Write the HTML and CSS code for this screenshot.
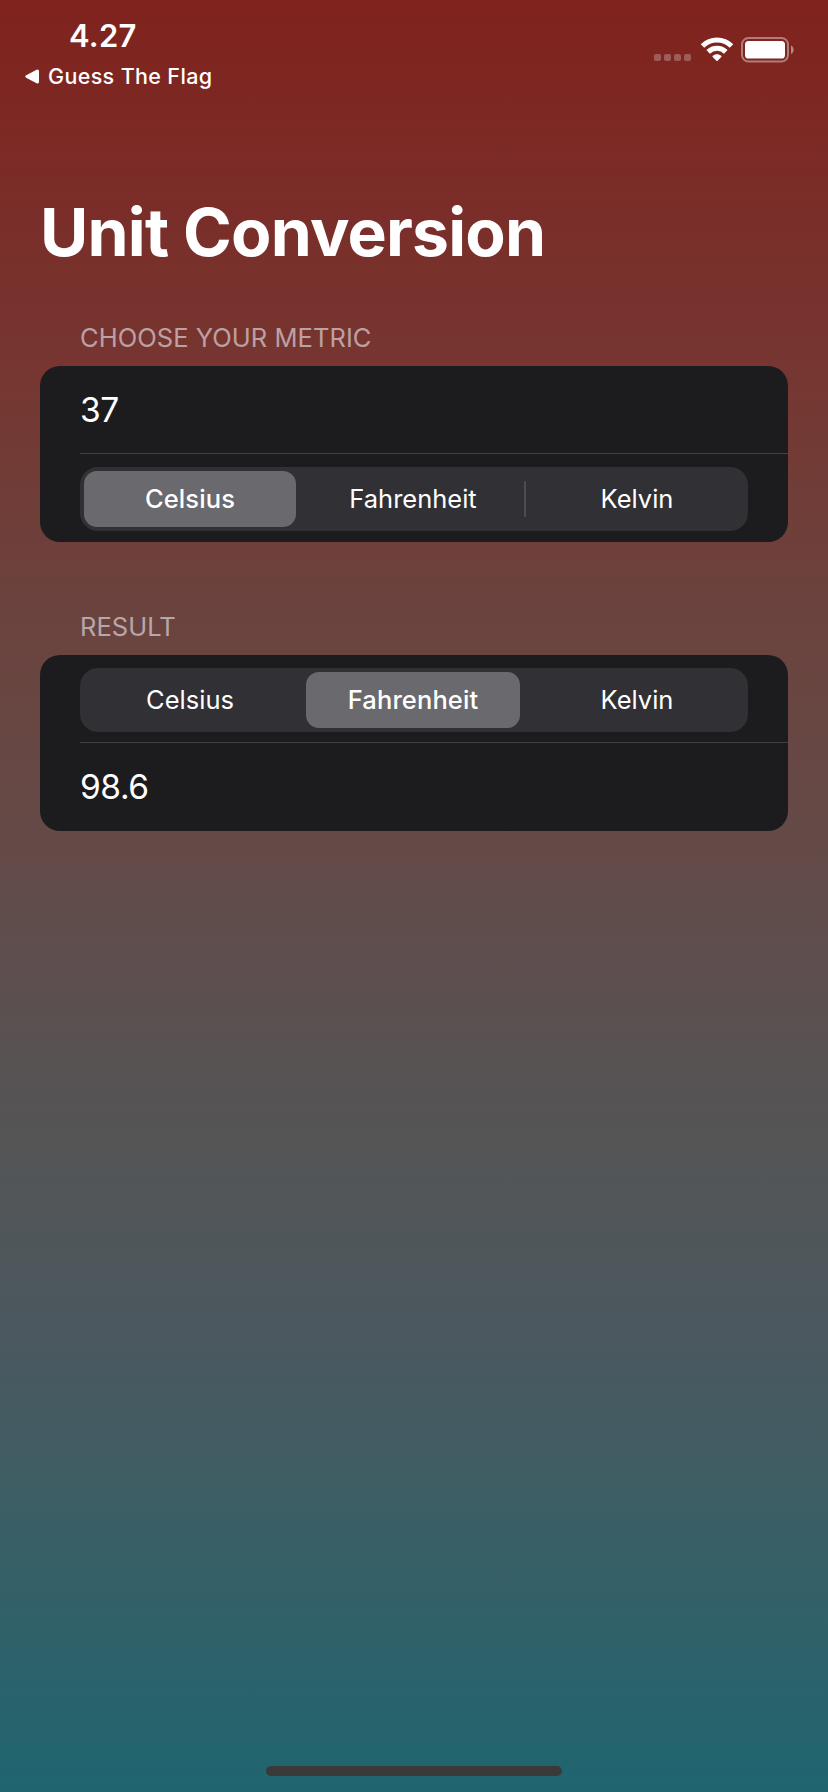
FILE: index.html
```html
<!DOCTYPE html>
<html lang="en">
<head>
<meta charset="utf-8">
<title>Unit Conversion</title>
<link rel="stylesheet" href="styles.css">
</head>
<body>
<div class="screen">
  <header class="status">
    <div class="status-left">
      <div class="time"><span>4.27</span></div>
      <div class="back">
        <svg width="15" height="15" viewBox="0 0 15 15"><path d="M1.2 6.3 11.6.8Q14 0 14 2.2v10.6q0 2.200-2.400 1.400L1.200 8.700Q-.6 7.500 1.200 6.300Z" fill="#fff"/></svg>
        <span>Guess The Flag</span>
      </div>
    </div>
    <div class="status-icons">
      <svg class="signal" width="38" height="26" viewBox="0 0 38 26" fill="#fff" fill-opacity=".25">
        <rect x="0" y="17" width="7" height="7" rx="2"/><rect x="10" y="17" width="7" height="7" rx="2"/><rect x="20" y="17" width="7" height="7" rx="2"/><rect x="30" y="17" width="7" height="7" rx="2"/>
      </svg>
      <svg class="wifi" width="34" height="26" viewBox="0 0 34 26">
        <g fill="none" stroke="#fff" stroke-width="5"><path d="M2.500 9.100A20.500 20.500 0 0 1 31.500 9.100"/><path d="M8.200 14.900A12.500 12.500 0 0 1 25.800 14.900"/></g>
        <path d="M17 17.300c1.700 0 3.100.6 4.200 1.500.5.400.5.800.1 1.200l-3.700 3.700q-.6.600-1.200 0L12.700 20c-.4-.4-.4-.8.100-1.200 1.100-.9 2.500-1.500 4.200-1.500Z" fill="#fff"/>
      </svg>
      <svg class="battery" width="54" height="26" viewBox="0 0 54 26">
        <rect x="1" y="1" width="46" height="23.500" rx="6.500" fill="none" stroke="#fff" stroke-opacity=".4" stroke-width="2"/>
        <rect x="4" y="4" width="40" height="17.500" rx="3.600" fill="#fff"/>
        <path d="M50 8.500c3.500 1.500 3.500 7 0 8.500Z" fill="#fff" fill-opacity=".45"/>
      </svg>
    </div>
  </header>
  <main class="content">
    <h1 class="title"><span>Unit Conversion</span></h1>
    <section class="group">
      <h2 class="label">CHOOSE YOUR METRIC</h2>
      <div class="card">
        <div class="value">37</div>
        <div class="rule"></div>
        <div class="segments">
          <div class="segment selected">Celsius</div>
          <div class="segment divided">Fahrenheit</div>
          <div class="segment">Kelvin</div>
        </div>
      </div>
    </section>
    <section class="group">
      <h2 class="label">RESULT</h2>
      <div class="card">
        <div class="segments">
          <div class="segment">Celsius</div>
          <div class="segment selected">Fahrenheit</div>
          <div class="segment">Kelvin</div>
        </div>
        <div class="rule"></div>
        <div class="value">98.6</div>
      </div>
    </section>
  </main>
  <div class="home-bar"></div>
</div>
</body>
</html>
```
FILE: styles.css
```css
* { box-sizing: border-box; }
body { margin: 0; font-family: Inter, "Liberation Sans", sans-serif; color: #fff; }
.screen {
  width: 828px; height: 1792px; overflow: hidden;
  display: flex; flex-direction: column;
  background: linear-gradient(180deg, #80221d 0%, #763631 20.500%, #6b433e 34%, #644a47 47%, #5b5050 56%, #545556 64%, #4a585f 75%, #405d63 82%, #1f6570 100%);
}
.status { height: 196px; display: flex; justify-content: space-between; }
.status-left { padding: 16px 0 0 25px; }
.time { height: 40px; padding-left: 44px; font-size: 31px; line-height: 40px; font-weight: 600; letter-spacing: .2px; }
.back { height: 40px; display: flex; align-items: center; gap: 8px; font-size: 21.500px; line-height: 40px; font-weight: 500; letter-spacing: .35px; }
.status-icons { display: flex; padding: 37px 33px 0 0; }
.wifi { margin-left: 8px; }
.battery { margin-left: 7px; }
.content { padding: 0 40px; }
.title { margin: 0; height: 124px; font-size: 66px; line-height: 72px; font-weight: 700; letter-spacing: -.8px; }
.group { margin-bottom: 67px; }
.label { margin: 0; height: 46px; padding: 0 0 0 40px; font-size: 25.500px; line-height: 36px; font-weight: 400; letter-spacing: .05px; color: rgba(235,235,245,.6); }
.card { height: 176px; background: #1c1c1e; border-radius: 20px; padding-left: 40px; display: flex; flex-direction: column; }
.value { height: 87px; line-height: 88px; font-size: 33.500px; letter-spacing: -.4px; }
.rule { height: 1px; background: #414144; }
.segments {
  width: 668px; height: 64px; margin: 13px 0 11px; padding: 4px;
  display: grid; grid-template-columns: 212px 214px 214px; column-gap: 10px;
  background: #313035; border-radius: 18px;
}
.segments:first-child { margin-bottom: 10px; }
.segment { position: relative; height: 56px; line-height: 56px; text-align: center; font-size: 25.500px; border-radius: 13px; }
.selected { background: #69696e; font-weight: 500; letter-spacing: .1px; }
.divided::after { content: ""; position: absolute; right: -6px; top: 10px; width: 2px; height: 36px; border-radius: 1px; background: #4d4c52; }
.home-bar { width: 296px; height: 10px; margin: auto auto 16px; border-radius: 5px; background: #3a3a3a; }
```
